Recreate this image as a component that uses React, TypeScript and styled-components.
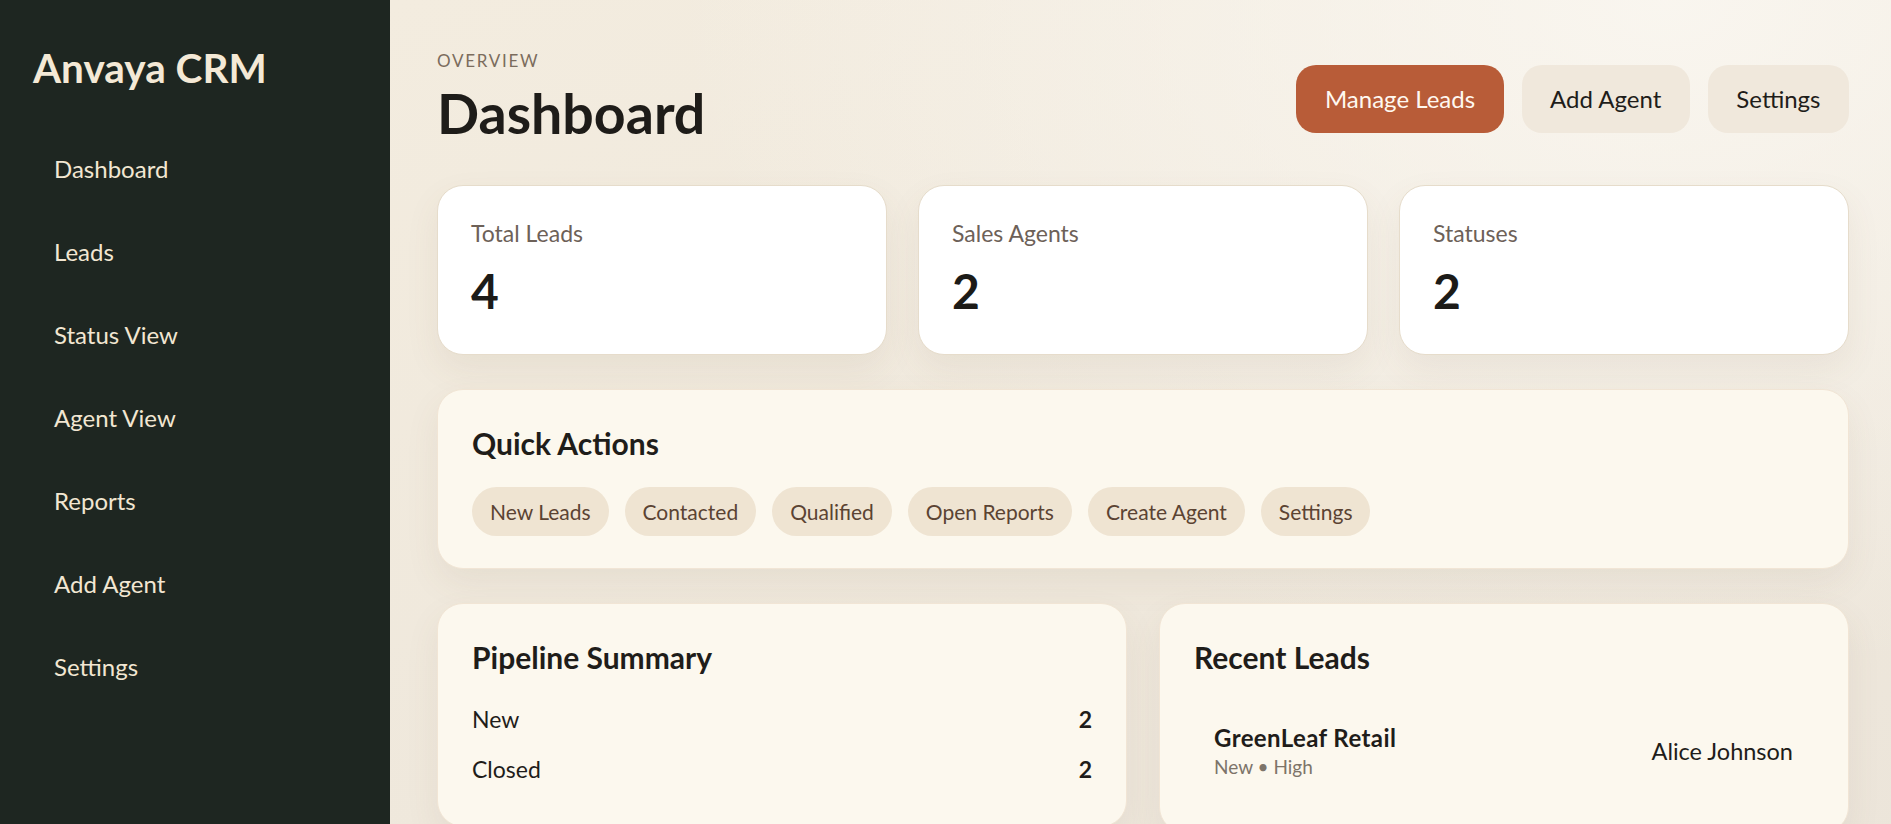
import React from "react";
import styled, { createGlobalStyle } from "styled-components";

const GlobalStyle = createGlobalStyle`
  html, body { margin: 0; padding: 0; }
  body {
    font-family: Lato, "Noto Sans", "Liberation Sans", sans-serif;
    background: #f1ebe0;
    color: #1f1d1a;
  }
  * { box-sizing: border-box; }
`;

const Layout = styled.div`
  display: flex;
  min-height: 100vh;
`;

const Sidebar = styled.aside`
  width: 390px;
  flex-shrink: 0;
  background: #1e2621;
  padding: 44px 33px;
  display: flex;
  flex-direction: column;
  gap: 35px;
`;

const Brand = styled.h2`
  margin: 0;
  font-size: 40.5px;
  line-height: 1.2;
  font-weight: 700;
  color: #f4e9d6;
`;

const Nav = styled.nav`
  display: flex;
  flex-direction: column;
`;

const NavItem = styled.a`
  display: block;
  padding: 27.1px 21px;
  font-size: 24px;
  line-height: 1.2;
  color: #f2e6d2;
  text-decoration: none;
`;

const Main = styled.main`
  flex: 1;
  padding: 51px 42px 40px 47px;
  background:
    radial-gradient(ellipse at 85% 0%, rgba(250, 247, 241, 0.9), rgba(250, 247, 241, 0) 55%),
    linear-gradient(160deg, #f3ecdf 0%, #efe8dc 60%, #ece5da 100%);
  display: flex;
  flex-direction: column;
  gap: 34px;
`;

const Header = styled.header`
  display: flex;
  justify-content: space-between;
  align-items: center;
  margin-bottom: 4px;
`;

const TitleBlock = styled.div`
  display: flex;
  flex-direction: column;
  gap: 9px;
`;

const Eyebrow = styled.div`
  font-size: 17px;
  line-height: 1.2;
  letter-spacing: 0.1em;
  color: #7b6c5d;
  text-transform: uppercase;
`;

const PageTitle = styled.h1`
  margin: 0;
  font-size: 55.5px;
  line-height: 1.2;
  font-weight: 700;
  color: #1e1c19;
`;

const Actions = styled.div`
  display: flex;
  gap: 18px;
`;

const Button = styled.button<{ $primary?: boolean }>`
  height: 67.5px;
  padding: 0 28.5px;
  border: none;
  border-radius: 20px;
  font-family: inherit;
  font-size: 24px;
  background: ${(p) => (p.$primary ? "#b85c38" : "#f0e8dc")};
  color: ${(p) => (p.$primary ? "#fff8f0" : "#1f1d1a")};
  cursor: pointer;
`;

const StatGrid = styled.section`
  display: grid;
  grid-template-columns: repeat(3, 1fr);
  gap: 31px;
`;

const StatCard = styled.div`
  background: #ffffff;
  border: 1px solid #e6dccb;
  border-radius: 26px;
  padding: 34px 33px 34px;
  display: flex;
  flex-direction: column;
  gap: 15.5px;
  box-shadow: 0 14px 34px rgba(120, 95, 60, 0.08);
`;

const StatLabel = styled.div`
  font-size: 23px;
  line-height: 1.15;
  color: #6d6158;
`;

const StatValue = styled.div`
  font-size: 48px;
  line-height: 1.2;
  font-weight: 700;
  color: #1c1b18;
`;

const Panel = styled.section`
  background: #fcf8ee;
  border: 1px solid #f1e5d5;
  border-radius: 26px;
  padding: 35px 34px 32px;
  box-shadow: 0 14px 34px rgba(120, 95, 60, 0.08);
  display: flex;
  flex-direction: column;
`;

const PanelTitle = styled.h3`
  margin: 0;
  font-size: 30px;
  line-height: 1.2;
  font-weight: 700;
  color: #1f1d1a;
`;

const Chips = styled.div`
  display: flex;
  flex-wrap: wrap;
  gap: 16px;
  margin-top: 26px;
`;

const Chip = styled.button`
  height: 49px;
  padding: 0 18px;
  border: none;
  border-radius: 999px;
  background: #efe4d2;
  color: #5b4333;
  font-family: inherit;
  font-size: 21px;
  cursor: pointer;
`;

const TwoCol = styled.div`
  display: grid;
  grid-template-columns: 1fr 1fr;
  gap: 32px;
  align-items: start;
`;

const StatusList = styled.div`
  display: flex;
  flex-direction: column;
  margin-top: 19px;
`;

const StatusRow = styled.div`
  display: flex;
  justify-content: space-between;
  padding: 12px 0;
  font-size: 23px;
  line-height: 1.15;
  color: #1f1d1a;
`;

const Count = styled.span`
  font-weight: 700;
`;

const LeadList = styled.div`
  display: flex;
  flex-direction: column;
  margin-top: 28px;
`;

const LeadItem = styled.div`
  display: flex;
  justify-content: space-between;
  align-items: center;
  padding: 21px 21px 21px 20px;
  border-radius: 18px;
`;

const LeadInfo = styled.div`
  display: flex;
  flex-direction: column;
  gap: 5px;
`;

const LeadName = styled.div`
  font-size: 24px;
  line-height: 1.15;
  font-weight: 700;
  letter-spacing: 0.4px;
  color: #1f1d1a;
`;

const LeadMeta = styled.div`
  font-size: 19px;
  line-height: 1.2;
  color: #7d7469;
`;

const LeadAgent = styled.div`
  font-size: 23.5px;
  line-height: 1.2;
  color: #1f1d1a;
`;

const navItems = ["Dashboard", "Leads", "Status View", "Agent View", "Reports", "Add Agent", "Settings"];
const stats = [
  { label: "Total Leads", value: 4 },
  { label: "Sales Agents", value: 2 },
  { label: "Statuses", value: 2 },
];
const quick = ["New Leads", "Contacted", "Qualified", "Open Reports", "Create Agent", "Settings"];

export default function App() {
  return (
    <>
      <GlobalStyle />
      <Layout>
        <Sidebar>
          <Brand>Anvaya CRM</Brand>
          <Nav>
            {navItems.map((n) => (
              <NavItem key={n} href="#">
                {n}
              </NavItem>
            ))}
          </Nav>
        </Sidebar>
        <Main>
          <Header>
            <TitleBlock>
              <Eyebrow>Overview</Eyebrow>
              <PageTitle>Dashboard</PageTitle>
            </TitleBlock>
            <Actions>
              <Button $primary>Manage Leads</Button>
              <Button>Add Agent</Button>
              <Button>Settings</Button>
            </Actions>
          </Header>
          <StatGrid>
            {stats.map((s) => (
              <StatCard key={s.label}>
                <StatLabel>{s.label}</StatLabel>
                <StatValue>{s.value}</StatValue>
              </StatCard>
            ))}
          </StatGrid>
          <Panel>
            <PanelTitle>Quick Actions</PanelTitle>
            <Chips>
              {quick.map((q) => (
                <Chip key={q}>{q}</Chip>
              ))}
            </Chips>
          </Panel>
          <TwoCol>
            <Panel>
              <PanelTitle>Pipeline Summary</PanelTitle>
              <StatusList>
                <StatusRow>
                  <span>New</span>
                  <Count>2</Count>
                </StatusRow>
                <StatusRow>
                  <span>Closed</span>
                  <Count>2</Count>
                </StatusRow>
              </StatusList>
            </Panel>
            <Panel>
              <PanelTitle>Recent Leads</PanelTitle>
              <LeadList>
                <LeadItem>
                  <LeadInfo>
                    <LeadName>GreenLeaf Retail</LeadName>
                    <LeadMeta>New • High</LeadMeta>
                  </LeadInfo>
                  <LeadAgent>Alice Johnson</LeadAgent>
                </LeadItem>
              </LeadList>
            </Panel>
          </TwoCol>
        </Main>
      </Layout>
    </>
  );
}
